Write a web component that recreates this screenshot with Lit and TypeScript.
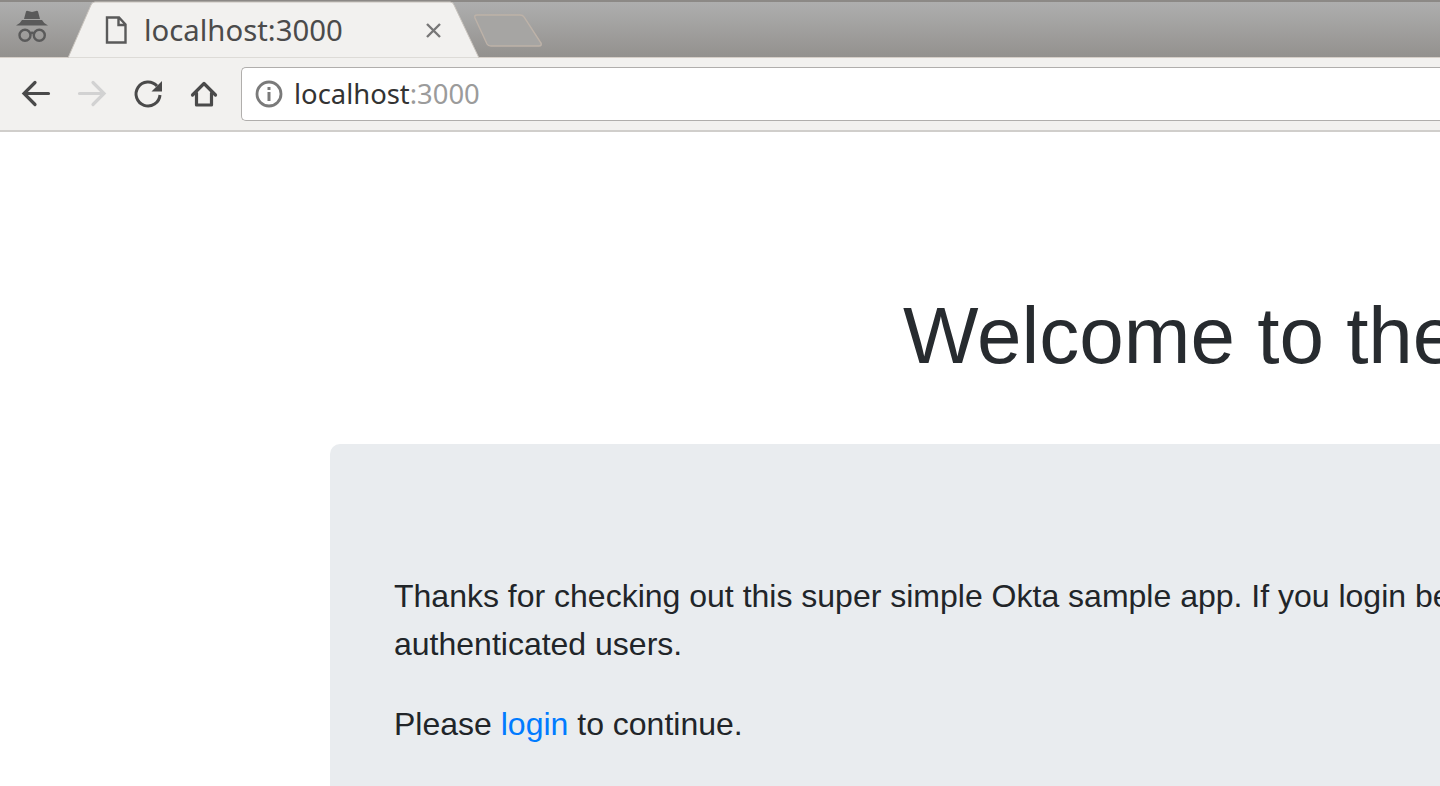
import { LitElement, html, css } from "lit";
import { customElement } from "lit/decorators.js";

@customElement("app-root")
export class AppRoot extends LitElement {
  static styles = css`
    :host { display: block; width: 1440px; height: 786px; overflow: hidden; background: #fff; }
    .strip { position: relative; height: 58px; box-sizing: border-box; border-top: 2px solid #8c8986; background: linear-gradient(#aeaeae, #93918e); border-bottom: 1px solid #d6cfc8; display: flex; }
    .tabshape { position: absolute; left: 0; top: -2px; width: 560px; height: 58px; }
    .tabtext { position: absolute; left: 144px; top: 8px; font: 29.3px/40px "Noto Sans", sans-serif; color: #4b4b4b; white-space: nowrap; }
    .toolbar { height: 74px; box-sizing: border-box; background: #f2f1ef; border-bottom: 2px solid #d0cecb; display: flex; align-items: center; }
    .ico { display: block; flex: none; }
    .buttons { display: flex; align-items: center; gap: 16px; padding-left: 16px; }
    .omni { margin-left: 17px; flex: 1; height: 54px; box-sizing: border-box; background: #fff; border: 1px solid #b0aeac; border-right: 0; border-radius: 5px 0 0 5px; display: flex; align-items: center; padding-left: 13px; gap: 11px; }
    .url { font: 27.4px/40px "Noto Sans", sans-serif; color: #333; }
    .url span { color: #9b9b9b; }
    main { padding-left: 330px; font-family: "Liberation Sans", sans-serif; color: #212529; }
    h1 { margin: 0; padding: 160px 0 64px 573px; font-weight: 300; font-size: 80px; line-height: 88px; white-space: nowrap; width: 1110px; box-sizing: border-box; overflow: hidden; color: #272b2f; }
    .jumbo { background: #e9ecef; border-radius: 10px 0 0 0; padding: 128px 0 0 64px; height: 400px; box-sizing: border-box; font-size: 32px; line-height: 48px; }
    p { margin: 0 0 32px; width: 1046px; white-space: nowrap; }
    a { color: #007bff; text-decoration: none; }
  `;
  render() {
    return html`
      <div class="strip">
        <svg class="tabshape" viewBox="0 0 560 58">
          <path d="M68 58 L91 5 Q92 2 95 2 L450 2 Q453 2 454 5 L479 58 Z" fill="#f2f1ef" stroke="#c9c4be" stroke-width="1"/>
          <path d="M475 18 Q474 15 477 15 L520 15 Q523 15 524 17 L541 43 Q542 46 539 46 L491 46 Q488 46 487 44 Z" fill="#a6a5a3" stroke="#bdb2a8" stroke-width="1.4"/>
          <path d="M24 19 L26 11.500 Q26.500 10.500 28 11 L32 12 L36 11 Q37.500 10.500 38 11.500 L40 19 Z" fill="#5a5a5a"/>
          <path d="M16 25.500 Q20 24 22 20 H42 Q44 24 48 25.500 Z" fill="#5a5a5a"/>
          <g fill="none" stroke="#5a5a5a" stroke-width="2.400"><circle cx="25" cy="35.300" r="5.500"/><circle cx="39.300" cy="35.300" r="5.500"/><path d="M30 33.500q2-1.500 4.300 0"/></g>
          <path d="M107 17.500h12l6.500 7v18h-18.500z M118.500 17.500v7.500h7" fill="none" stroke="#5a5a5a" stroke-width="2.400"/>
          <path d="M427 24l13 13M440 24l-13 13" stroke="#777" stroke-width="2.400" fill="none"/>
        </svg>
        <div class="tabtext">localhost:3000</div>
      </div>
      <div class="toolbar">
        <div class="buttons">
          <svg class="ico" width="40" height="40" viewBox="0 0 40 40"><path d="M32.500 19.500H8.500M19 8.500L8 19.500l11 11" fill="none" stroke="#4a4a4a" stroke-width="3.200" stroke-linecap="round"/></svg>
          <svg class="ico" width="40" height="40" viewBox="0 0 40 40"><path d="M7.500 19.500h24M21 8.500l11 11-11 11" fill="none" stroke="#d2d2d2" stroke-width="3.200" stroke-linecap="round"/></svg>
          <svg class="ico" width="40" height="40" viewBox="0 0 40 40"><path d="M29 12A12 12 0 1 0 32 21" fill="none" stroke="#4a4a4a" stroke-width="3"/><path d="M34 7v10.500H23.500z" fill="#4a4a4a"/></svg>
          <svg class="ico" width="40" height="40" viewBox="0 0 40 40"><path d="M8.500 21L20 9.500 31.500 21M12.500 19v12h15V19" fill="none" stroke="#4a4a4a" stroke-width="3.200" stroke-linecap="round" stroke-linejoin="round"/></svg>
        </div>
        <div class="omni">
          <svg class="ico" width="28" height="28" viewBox="0 0 28 28"><circle cx="14" cy="14" r="12" fill="none" stroke="#7a7a7a" stroke-width="2.800"/><path d="M12.500 12h3v9h-3zM12.500 7h3v3h-3z" fill="#7a7a7a"/></svg>
          <div class="url">localhost<span>:3000</span></div>
        </div>
      </div>
      <main>
        <h1>Welcome to the</h1>
        <div class="jumbo">
          <p>Thanks for checking out this super simple Okta sample app. If you login be<br>authenticated users.</p>
          <p>Please <a href="#">login</a> to continue.</p>
        </div>
      </main>
    `;
  }
}
